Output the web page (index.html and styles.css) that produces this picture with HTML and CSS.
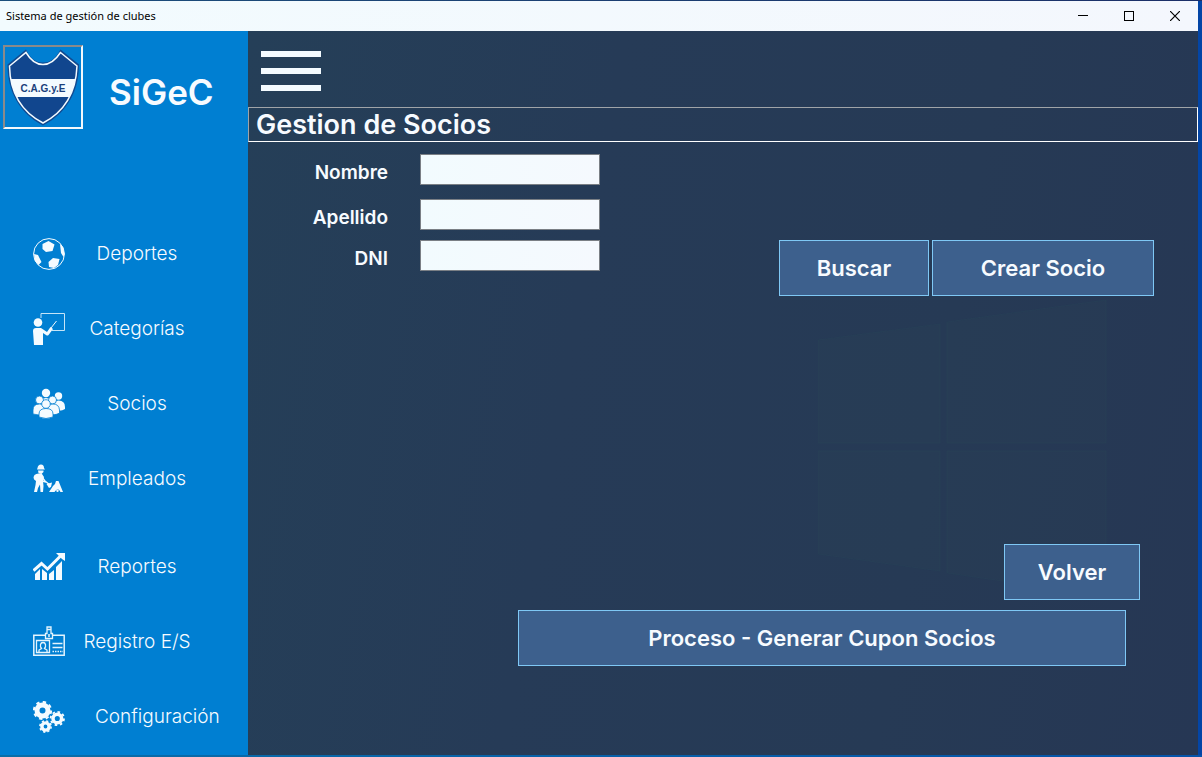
FILE: index.html
```html
<!DOCTYPE html>
<html lang="es">
<head>
<meta charset="utf-8">
<title>Sistema de gestión de clubes</title>
<link rel="stylesheet" href="styles.css">
</head>
<body>
<div class="window">
  <header class="titlebar">
    <span class="titlebar-text">Sistema de gestión de clubes</span>
    <div class="window-controls">
      <button class="control" type="button" aria-label="Minimizar"><svg width="10" height="10" viewBox="0 0 10 10" shape-rendering="crispEdges"><path d="M0 4h10v1H0z"/></svg></button>
      <button class="control" type="button" aria-label="Maximizar"><svg width="10" height="10" viewBox="0 0 10 10" shape-rendering="crispEdges"><path fill-rule="evenodd" d="M0 0h10v10H0zM1 1v8h8V1z"/></svg></button>
      <button class="control" type="button" aria-label="Cerrar"><svg width="10" height="10" viewBox="0 0 10 10"><path fill="none" stroke="#000" stroke-width="1.2" d="M0 0L10 10M10 0L0 10"/></svg></button>
    </div>
  </header>
  <div class="content">
    <aside class="sidebar">
      <div class="brand">
        <div class="crest">
          <svg width="76" height="80" viewBox="0 0 76 80" role="img" aria-label="Escudo C.A.G.y.E">
            <defs><clipPath id="shield"><path d="M21 5.500C26 14 31 17.500 38 17.500S50 14 55.500 5.500L72 19C71 43 61 64 38 76C15 64 5 43 4.500 19Z"/></clipPath></defs>
            <path fill="#114a91" d="M21 2.500C26 12.500 31 15.500 38 15.500S50 12.500 55.500 2.500L74 17.500C74 44 62 66 38 78.500C14 66 2.500 44 2.500 17.500Z"/>
            <g clip-path="url(#shield)"><path fill="#11468e" d="M0 0h76v80H0z"/><path fill="#f4fbff" d="M0 32h76v18H0z"/></g>
            <path fill="none" stroke="#f4fbff" stroke-width="1.500" d="M21 5.500C26 14 31 17.500 38 17.500S50 14 55.500 5.500L72 19C71 43 61 64 38 76C15 64 5 43 4.500 19Z"/>
            <text class="crest-text" x="38" y="45" text-anchor="middle">C.A.G.y.E</text>
          </svg>
        </div>
        <span class="brand-name">SiGeC</span>
      </div>
      <nav class="menu">
        <button class="menu-item" type="button">
          <svg width="32" height="32" viewBox="0 0 32 32" fill="#f4fbff"><circle cx="16" cy="16" r="15.400" fill="none" stroke="#f4fbff"/><path d="M9.500 6L15.500 3L21.500 6.500L19.500 13L13 14L9.500 11ZM27 6L30 9L31.500 16L30.500 19L28 15ZM1 16L5 17L8.500 24L5.500 27L2 23ZM15.500 24L20 20L26.500 21L25 27L21 30L16 29Z"/></svg>
          <span class="menu-label">Deportes</span>
        </button>
        <button class="menu-item" type="button">
          <svg width="32" height="32" viewBox="0 0 32 32" fill="#f4fbff"><path fill="none" stroke="#c5e4f7" d="M8 5V.500H31.500V17.500H19"/><circle cx="5" cy="9.500" r="4.300"/><path d="M0 18Q0 15 3 15H8L14 19L17.500 14L20 16L15.500 22Q14.500 23 13 22L10 20V32H1Z"/><path fill="none" stroke="#f4fbff" d="M18 15L23.500 8"/></svg>
          <span class="menu-label">Categorías</span>
        </button>
        <button class="menu-item" type="button">
          <svg width="32" height="32" viewBox="0 0 32 32" fill="#f4fbff"><circle cx="13" cy="5" r="4.200"/><path d="M7 17Q7 10 13 10Q18.500 10 19 17V21H7Z"/><circle cx="25.500" cy="8" r="3.700"/><path d="M20 19Q21 12.500 25.500 12.500Q32 12.500 32 19V21Q28 24 21 22Z"/><g stroke="#007fd2" stroke-width=".8"><circle cx="6.500" cy="12" r="4"/><path d="M0 26V22Q0 16 6.500 16Q12 16 12 22V26Q6 28 0 26Z"/><circle cx="19.500" cy="12" r="4"/><path d="M14 26V22Q14 16 20 16Q26 16 26.500 22V25Q22 28 14 26Z"/><circle cx="13" cy="16" r="4.300"/><path d="M6 29V26Q6 20.500 13 20.500T20 26V29Q13 32 6 29Z"/></g></svg>
          <span class="menu-label">Socios</span>
        </button>
        <button class="menu-item" type="button">
          <svg width="32" height="32" viewBox="0 0 32 32" fill="#f4fbff"><path d="M4.500 5Q5 1.500 8 1.500Q11 1.500 11 5L12 6.500H4ZM5 7.500H10.500V9L8.500 11L5.500 10ZM1.500 12Q4 9.500 9 11L11 14L10 18L10.500 23L10 29H7.500L7 21.500L5 25L4 29H1L2.500 22L3 18Q-1 16 1.500 12Z"/><path fill="none" stroke="#f4fbff" stroke-width="1.300" d="M9 14L12 18L17 22M9 18L13 19"/><path d="M13.500 21L19 19.500L18 24L16 25ZM16 29L20 23L22 21L23 18H25.500L30 29H27.500Q25 23.500 21.500 29Z"/><circle cx="24.500" cy="27.800" r="1.200"/></svg>
          <span class="menu-label">Empleados</span>
        </button>
        <button class="menu-item menu-item-split" type="button">
          <svg width="32" height="32" viewBox="0 0 32 32" fill="#f4fbff"><path d="M2 23L7 18V29H2ZM9 18L14 22V29H9ZM16 23L21 19V29H16ZM23 16L29 10V29H23Z"/><path fill="none" stroke="#f4fbff" stroke-width="3" d="M.500 19.500L8.500 12.500L14.500 18L28 4.500"/><path d="M23 2H32V10L29 8L25 4Z"/></svg>
          <span class="menu-label">Reportes</span>
        </button>
        <button class="menu-item" type="button">
          <svg width="32" height="32" viewBox="0 0 32 32" fill="none" stroke="#e4f4fd"><path d="M12 9.200H.800V29.200H31.200V9.200H20" stroke-width="1.500"/><path d="M12.500 12.500V7.500H14V1H18V7.500H19.500V12.500ZM14 3.500H18M3.500 14.500H16.500V26.500H3.500ZM19.500 17.500H29.500M19.500 21.500H29.500" stroke-width="1.300"/><path d="M6 26V24L8.500 22.500Q7 20.500 7.500 18.500Q8 16.500 10 16.500T12.500 18.500Q13 20.500 11.500 22.500L14 24V26" stroke-width="1.300"/><path d="M19.500 25.500H30" stroke-width="1.500" stroke-dasharray="1.500 1"/><path d="M16 8V11" stroke-width="1.500"/></svg>
          <span class="menu-label">Registro E/S</span>
        </button>
        <button class="menu-item" type="button">
          <svg width="32" height="32" viewBox="0 0 32 32" fill="none" stroke="#f4fbff"><circle cx="9.500" cy="9.500" r="5.500" stroke-width="5"/><circle cx="9.500" cy="9.500" r="8.600" stroke-width="2" stroke-dasharray="3.400 3.354"/><circle cx="24.300" cy="17.500" r="4.300" stroke-width="3.500"/><circle cx="24.300" cy="17.500" r="6.700" stroke-width="1.800" stroke-dasharray="2.600 2.662"/><circle cx="12.500" cy="25.500" r="3.600" stroke-width="3.400"/><circle cx="12.500" cy="25.500" r="5.600" stroke-width="1.600" stroke-dasharray="2.200 2.198"/></svg>
          <span class="menu-label menu-label-long">Configuración</span>
        </button>
      </nav>
    </aside>
    <main class="main">
      <svg class="backdrop" width="290" height="298" viewBox="0 0 290 298"><path d="M0 40L122 24V143H0ZM129 22L288 0V143H129ZM0 151H122V271L0 254ZM129 151H288V296L129 273Z"/></svg>
      <div class="toolbar">
        <button class="hamburger" type="button" aria-label="Menú"><span class="bar"></span><span class="bar"></span><span class="bar"></span></button>
      </div>
      <h1 class="page-title">Gestion de Socios</h1>
      <form class="search">
        <div class="fields">
          <div class="field"><label class="field-label" for="nombre">Nombre</label><input class="field-input" id="nombre" type="text"></div>
          <div class="field field-last-name"><label class="field-label" for="apellido">Apellido</label><input class="field-input" id="apellido" type="text"></div>
          <div class="field"><label class="field-label" for="dni">DNI</label><input class="field-input" id="dni" type="text"></div>
        </div>
        <div class="search-actions">
          <button class="button button-search" type="button">Buscar</button>
          <button class="button button-create" type="button">Crear Socio</button>
        </div>
      </form>
      <div class="footer-actions">
        <button class="button button-back" type="button">Volver</button>
        <button class="button button-process" type="button">Proceso - Generar Cupon Socios</button>
      </div>
    </main>
  </div>
</div>
</body>
</html>
```
FILE: styles.css
```css
* { box-sizing: border-box; }

body {
  margin: 0;
  min-height: 100vh;
  display: flex;
  padding: 1px 4px 2px 0;
  background: linear-gradient(90deg, #0a6ea8, #0653a8) bottom / 100% 2px no-repeat,
    linear-gradient(90deg, #1b4f7c, #1b2f68) top / 100% 1px no-repeat, #0345a6;
  color: #f7fbff;
  font-family: "Century Gothic", Inter, "Open Sans", sans-serif;
}

button {
  margin: 0;
  padding: 0;
  border: 0;
  background: none;
  color: inherit;
  font: inherit;
}

.window { flex: 1; display: flex; flex-direction: column; }

.titlebar {
  height: 30px;
  display: flex;
  align-items: center;
  justify-content: space-between;
  padding-left: 6px;
  background: linear-gradient(90deg, #f2fbfe, #f4f7fd);
  color: #000;
}
.titlebar-text { font: 11px/16px "Segoe UI", "Noto Sans", sans-serif; }
.window-controls { display: flex; align-self: stretch; }
.control { width: 46px; display: flex; align-items: center; justify-content: center; }

.content { flex: 1; display: flex; }

.sidebar {
  flex: none;
  width: 248px;
  padding-top: 14px;
  background: #007fd2;
}
.brand { display: flex; align-items: center; gap: 26px; padding-left: 3px; }
.crest {
  border: 2px solid;
  border-color: #8a8a8a #f4f8fc #f4f8fc #8a8a8a;
  line-height: 0;
}
.crest-text { font: bold 10px "Liberation Sans", sans-serif; fill: #1a3f7c; }
.brand-name { padding-top: 10px; font-size: 35px; line-height: 44px; font-weight: 600; }

.menu { margin-top: 87px; display: flex; flex-direction: column; }
.menu-item {
  height: 75px;
  display: flex;
  align-items: center;
  gap: 18px;
  padding-left: 33px;
}
.menu-item-split { margin-top: 13px; }
.menu-label {
  min-width: 108px;
  text-align: center;
  font-size: 19px;
  line-height: 24px;
  font-weight: 300;
}
.menu-label-long { padding-left: 12px; }

.main {
  position: relative;
  flex: 1;
  display: flex;
  flex-direction: column;
  background: linear-gradient(100deg, #253f58, #263b57 35%, #263a55 70%, #263754);
}
.backdrop {
  position: absolute;
  right: 90px;
  top: 269px;
  fill: #2d4a55;
  fill-opacity: .15;
  stroke: #2c5260;
  stroke-opacity: .2;
}
.toolbar { padding: 20px 13px 16px; display: flex; }
.hamburger { width: 60px; display: flex; flex-direction: column; gap: 11px; }
.bar { height: 6px; background: #f4fbff; }

.page-title {
  margin: 0;
  padding: 0 7px;
  border: 1px solid;
  border-color: #a0a4a8 #fff #fff #a0a4a8;
  font-size: 27px;
  line-height: 33px;
  font-weight: 600;
}

.search {
  display: flex;
  justify-content: space-between;
  align-items: flex-end;
  padding: 12px 44px 0 0;
}
.fields { display: flex; flex-direction: column; padding-bottom: 25px; }
.field { display: flex; align-items: center; gap: 32px; }
.field-last-name { margin: 14px 0 10px; }
.field-label {
  width: 140px;
  padding-top: 7px;
  text-align: right;
  font-size: 19px;
  line-height: 24px;
  font-weight: 600;
}
.field-input {
  width: 180px;
  height: 31px;
  padding: 0 6px;
  border: 1px solid #7a7f85;
  border-radius: 0;
  background: linear-gradient(90deg, #f2fbfe, #f5f9fe);
  font: 19px/24px Inter, sans-serif;
}

.search-actions { position: relative; display: flex; gap: 3px; }
.button {
  height: 56px;
  border: 1px solid #7fc8f5;
  background: #3d608d;
  font-size: 22px;
  line-height: 28px;
  font-weight: 600;
}
.button-search { width: 150px; }
.button-create { width: 222px; }
.button-back { width: 136px; margin-right: 58px; }
.button-process { width: 608px; margin-right: 72px; }

.footer-actions {
  position: relative;
  margin-top: auto;
  padding-bottom: 89px;
  display: flex;
  flex-direction: column;
  align-items: flex-end;
  gap: 10px;
}
```
